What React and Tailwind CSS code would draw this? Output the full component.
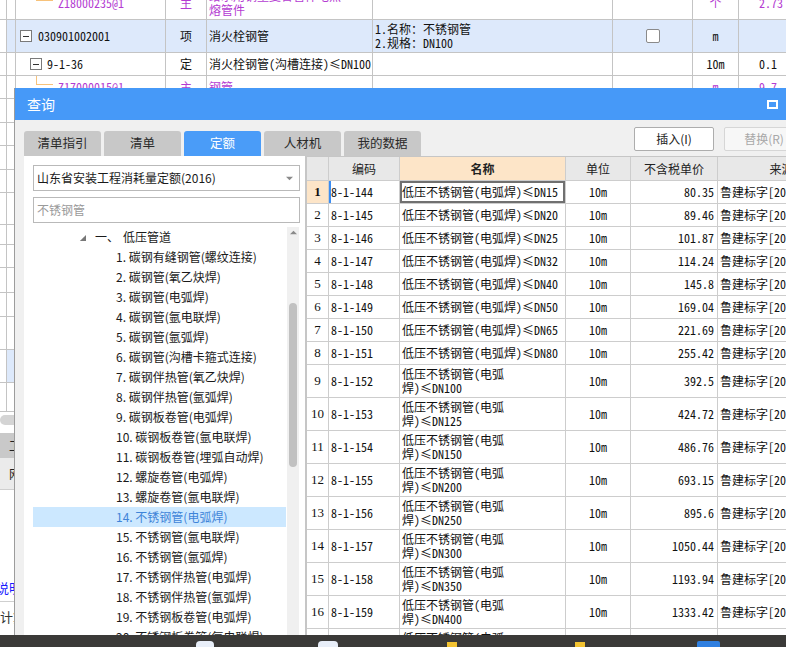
const sim = "font-['Noto_Sans_Mono_CJK_SC','Noto_Sans_CJK_SC',monospace]"
const ui = "font-['Noto_Sans_CJK_SC','Noto_Sans',sans-serif]"

const bgCols = 'grid grid-cols-[7px_9px_150px_41px_166px_240px_80px_46px_120px]'
const bgCell = 'border-r border-b border-[#c4c4c4] flex items-center'

const treeItems = [
  '碳钢有缝钢管(螺纹连接)',
  '碳钢管(氧乙炔焊)',
  '碳钢管(电弧焊)',
  '碳钢管(氩电联焊)',
  '碳钢管(氩弧焊)',
  '碳钢管(沟槽卡箍式连接)',
  '碳钢伴热管(氧乙炔焊)',
  '碳钢伴热管(氩弧焊)',
  '碳钢板卷管(电弧焊)',
  '碳钢板卷管(氩电联焊)',
  '碳钢板卷管(埋弧自动焊)',
  '螺旋卷管(电弧焊)',
  '螺旋卷管(氩电联焊)',
  '不锈钢管(电弧焊)',
  '不锈钢管(氩电联焊)',
  '不锈钢管(氩弧焊)',
  '不锈钢伴热管(电弧焊)',
  '不锈钢伴热管(氩弧焊)',
  '不锈钢板卷管(电弧焊)',
  '不锈钢板卷管(氩电联焊)',
]

const rows = [
  ['8-1-144', 'DN15', '80.35'],
  ['8-1-145', 'DN20', '89.46'],
  ['8-1-146', 'DN25', '101.87'],
  ['8-1-147', 'DN32', '114.24'],
  ['8-1-148', 'DN40', '145.8'],
  ['8-1-149', 'DN50', '169.04'],
  ['8-1-150', 'DN65', '221.69'],
  ['8-1-151', 'DN80', '255.42'],
  ['8-1-152', 'DN100', '392.5'],
  ['8-1-153', 'DN125', '424.72'],
  ['8-1-154', 'DN150', '486.76'],
  ['8-1-155', 'DN200', '693.15'],
  ['8-1-156', 'DN250', '895.6'],
  ['8-1-157', 'DN300', '1050.44'],
  ['8-1-158', 'DN350', '1193.94'],
  ['8-1-159', 'DN400', '1333.42'],
  ['8-1-160', 'DN450', '1471.08'],
]

const gridCell = 'border-r border-b border-[#cdcdcd] flex items-center shrink-0'

function MinusBox() {
  return (
    <span className="w-[12px] h-[12px] border border-[#7a7a7a] bg-white flex items-center justify-center shrink-0">
      <span className="w-[6px] h-px bg-[#333]" />
    </span>
  )
}

function Corner() {
  return (
    <>
      <span className="absolute left-[20px] top-0 w-px h-[calc(50%-3px)] bg-[#f7c27a]" />
      <span className="absolute left-[20px] top-[calc(50%-3px)] w-[17px] h-px bg-[#f7c27a]" />
    </>
  )
}

function Background() {
  const filler = [24, 23, 24, 23, 32, 20, 23, 25, 24, 33, 33, 29]
  return (
    <div className={`${sim} text-[12px] text-[#111]`}>
      <div className="-mt-[14px]">
        {/* row A */}
        <div className={`${bgCols} h-[34px] text-[#b43cd2]`}>
          <div className={bgCell} />
          <div className={bgCell} />
          <div className={`${bgCell} relative`}>
            <Corner />
            <span className="ml-[42px]">Z18000235@1</span>
          </div>
          <div className={`${bgCell} justify-center`}>主</div>
          <div className={`${bgCell} pl-[2px] leading-[14px]`}>
            给水用钢塑复合管件电热
            <br />
            熔管件
          </div>
          <div className={bgCell} />
          <div className={bgCell} />
          <div className={`${bgCell} justify-center`}>个</div>
          <div className={`${bgCell} pl-[20px]`}>2.73</div>
        </div>
        {/* row B */}
        <div className={`${bgCols} h-[33px]`}>
          <div className={bgCell} />
          <div className={`${bgCell} bg-[#dde9fb]`} />
          <div className={`${bgCell} bg-[#dde9fb]`}>
            <span className="ml-[4px]">
              <MinusBox />
            </span>
            <span className="ml-[6px]">030901002001</span>
          </div>
          <div className={`${bgCell} bg-[#dde9fb] justify-center`}>项</div>
          <div className={`${bgCell} bg-[#dde9fb] pl-[2px]`}>消火栓钢管</div>
          <div className={`${bgCell} bg-[#dde9fb] pl-[2px] leading-[14px]`}>
            1.名称：不锈钢管
            <br />
            2.规格：DN100
          </div>
          <div className={`${bgCell} bg-[#dde9fb] justify-center`}>
            <span className="w-[14px] h-[14px] rounded-[2px] border border-[#8a8a8a] bg-white" />
          </div>
          <div className={`${bgCell} bg-[#dde9fb] justify-center`}>m</div>
          <div className={`${bgCell} bg-[#dde9fb]`} />
        </div>
        {/* row C */}
        <div className={`${bgCols} h-[23px]`}>
          <div className={bgCell} />
          <div className={bgCell} />
          <div className={bgCell}>
            <span className="ml-[14px]">
              <MinusBox />
            </span>
            <span className="ml-[5px]">9-1-36</span>
          </div>
          <div className={`${bgCell} justify-center`}>定</div>
          <div className={`${bgCell} pl-[2px] whitespace-nowrap`}>消火栓钢管(沟槽连接)≤DN100</div>
          <div className={bgCell} />
          <div className={bgCell} />
          <div className={`${bgCell} justify-center`}>10m</div>
          <div className={`${bgCell} pl-[20px]`}>0.1</div>
        </div>
        {/* row D */}
        <div className={`${bgCols} h-[23px] text-[#b43cd2]`}>
          <div className={bgCell} />
          <div className={bgCell} />
          <div className={`${bgCell} relative`}>
            <Corner />
            <span className="ml-[42px]">Z17000015@1</span>
          </div>
          <div className={`${bgCell} justify-center`}>主</div>
          <div className={`${bgCell} pl-[2px]`}>钢管</div>
          <div className={bgCell} />
          <div className={bgCell} />
          <div className={`${bgCell} justify-center`}>m</div>
          <div className={`${bgCell} pl-[20px]`}>9.7</div>
        </div>
        {filler.map((h, i) => (
          <div key={i} className={bgCols} style={{ height: h }}>
            <div className={bgCell} />
            <div className={`${bgCell} ${i === 10 ? 'bg-[#dde9fb]' : ''}`} />
            <div className={`${bgCell} ${i === 10 ? 'bg-[#dde9fb]' : ''}`} />
            <div className={bgCell} />
            <div className={bgCell} />
            <div className={bgCell} />
            <div className={bgCell} />
            <div className={bgCell} />
            <div className={bgCell} />
          </div>
        ))}
      </div>
      <div className="h-[21px] pt-[3px] bg-white">
        <div className="h-[10px] w-[200px] rounded-full bg-[#d4d4d4]" />
      </div>
      <div className={`${ui} h-[25px] bg-[#c9c9c9] flex items-center pl-[9px] text-[12px] text-[#222]`}>工料机显示</div>
      <div className={`${ui} h-[32px] bg-[#ebebeb] border-b border-[#cfcfcf] flex items-center pl-[9px] text-[12px] text-[#222]`}>
        网格
      </div>
      <div className="h-[112px] bg-white border-b border-[#cfcfcf] flex items-end pb-[4px]">
        <span className={`${ui} -ml-[4px] text-[13px] text-[#1a1aff]`}>说明</span>
      </div>
      <div className={`${ui} h-[30px] bg-white flex items-center text-[13px] text-[#333]`}>计算</div>
    </div>
  )
}

function Tri({ className, points }) {
  return (
    <svg width="8" height="8" viewBox="0 0 8 8" className={className}>
      <polygon points={points} fill="currentColor" />
    </svg>
  )
}

function Dialog() {
  const tabs = ['清单指引', '清单', '定额', '人材机', '我的数据']
  return (
    <div className={`${ui} absolute left-[14px] top-[88px] w-[800px] h-[560px] flex flex-col border-l border-[#9c9c9c] bg-[#f0f0f0]`}>
      <div className="h-[32px] shrink-0 bg-[#4699f8] flex items-center justify-between pl-[12px] pr-[36px] text-white text-[14px]">
        <span>查询</span>
        <div className="w-[11px] h-[9px] border-2 border-white" />
      </div>

      <div className="h-[36px] shrink-0 flex pl-[9px] pt-[7px]">
        <div className="flex gap-[3px] self-end">
          {tabs.map((t) => (
            <div
              key={t}
              className={`w-[77px] h-[25px] rounded-t-[3px] flex items-center justify-center text-[12.5px] ${
                t === '定额' ? 'bg-[#4a9cf8] text-white' : 'bg-[#c8c8c8] text-[#2a2a2a]'
              }`}
            >
              {t}
            </div>
          ))}
        </div>
        <button className="ml-[213px] w-[80px] h-[24px] bg-white border border-[#adadad] rounded-[2px] text-[12px] text-[#222]">
          插入(I)
        </button>
        <button className="ml-[10px] w-[80px] h-[24px] bg-[#f7f7f7] border border-[#d6d6d6] rounded-[2px] text-[12px] text-[#a8a8a8]">
          替换(R)
        </button>
      </div>

      <div className="flex-1 flex pl-[9px] min-h-0">
        {/* left panel */}
        <div className="w-[281px] shrink-0 bg-white pt-[9px] pl-[9px] pr-[5px] flex flex-col">
          <div className="h-[26px] border border-[#b9b9b9] flex items-center justify-between pl-[3px] pr-[6px] text-[12px] text-[#1a1a1a]">
            <span>山东省安装工程消耗量定额(2016)</span>
            <Tri className="text-[#8a8a8a] w-[7px] h-[7px]" points="0,2 8,2 4,6" />
          </div>
          <div className="mt-[6px] h-[26px] border border-[#b9b9b9] flex items-center pl-[3px] text-[12px] text-[#9a9a9a]">
            不锈钢管
          </div>
          <div className="mt-[4px] flex flex-1 min-h-0">
            <div className="w-[253px] text-[12px] text-[#1a1a1a]">
              <div className="h-[20px] flex items-center">
                <Tri className="ml-[46px] text-[#777] w-[7px] h-[7px]" points="8,1 8,8 1,8" />
                <span className="ml-[9px]">一、</span>
                <span className="ml-[4px]">低压管道</span>
              </div>
              {treeItems.map((t, i) => (
                <div
                  key={t}
                  className={`h-[20px] flex items-center pl-[83px] whitespace-nowrap ${
                    i === 13 ? 'bg-[#cce8ff] text-[#3f84d8]' : ''
                  }`}
                >
                  {i + 1}. {t}
                </div>
              ))}
            </div>
            <div className="ml-[1px] w-[12px] bg-[#f0f0f0] flex flex-col items-center">
              <Tri className="mt-[2px] text-[#8a8a8a] w-[7px] h-[7px]" points="0,6 8,6 4,2" />
              <div className="mt-[67px] w-[8px] h-[164px] rounded-full bg-[#c1c1c1]" />
            </div>
          </div>
        </div>

        {/* grid */}
        <div className={`${sim} flex-1 bg-white border-l-2 border-t border-[#c6c6c6] text-[12px] text-[#111] overflow-hidden`}>
          <div className={`${ui} flex h-[24px] text-[12px] text-[#222]`}>
            <div className={`${gridCell} w-[22px] bg-[#e8e8e8]`} />
            <div className={`${gridCell} w-[71px] bg-[#e8e8e8] justify-center`}>编码</div>
            <div className={`${gridCell} w-[166px] bg-[#fde5c8] justify-center font-bold`}>名称</div>
            <div className={`${gridCell} w-[65px] bg-[#e8e8e8] justify-center`}>单位</div>
            <div className={`${gridCell} w-[87px] bg-[#e8e8e8] justify-center`}>不含税单价</div>
            <div className={`${gridCell} w-[128px] bg-[#e8e8e8] justify-center`}>来源</div>
          </div>
          {rows.map(([code, dn, price], i) => {
            const tall = i >= 8
            const first = i === 0
            return (
              <div key={code} className={`flex ${tall ? 'h-[33px]' : 'h-[23px]'}`}>
                <div
                  className={`${gridCell} w-[22px] justify-center font-['Liberation_Serif',serif] text-[13px] ${
                    first ? 'bg-[#fde5c8] font-bold' : ''
                  }`}
                >
                  {i + 1}
                </div>
                <div className={`${gridCell} w-[71px] pl-[2px] ${first ? 'shadow-[inset_2px_0_0_#3b8df2]' : ''}`}>
                  {code}
                </div>
                <div
                  className={`${gridCell} w-[166px] pl-[2px] leading-[14px] whitespace-nowrap ${
                    first ? 'shadow-[inset_0_0_0_2px_#707070]' : ''
                  }`}
                >
                  {tall ? (
                    <span>
                      低压不锈钢管(电弧
                      <br />
                      焊)≤{dn}
                    </span>
                  ) : (
                    <span>低压不锈钢管(电弧焊)≤{dn}</span>
                  )}
                </div>
                <div className={`${gridCell} w-[65px] justify-center`}>10m</div>
                <div className={`${gridCell} w-[87px] justify-end pr-[3px]`}>{price}</div>
                <div className={`${gridCell} w-[128px] pl-[2px] whitespace-nowrap overflow-hidden`}>
                  鲁建标字[2016]38号
                </div>
              </div>
            )
          })}
        </div>
      </div>
    </div>
  )
}

export default function App() {
  return (
    <div className="w-[786px] h-[647px] overflow-hidden flex flex-col bg-white">
      <div className="relative flex-1 overflow-hidden">
        <Background />
        <Dialog />
      </div>
      <div className="h-[12px] shrink-0 bg-[#3b3a38] flex items-start">
        <span className="ml-[196px] mt-[6px] w-[18px] h-[8px] rounded-t-[4px] bg-[#e8eef8]" />
        <span className="ml-[104px] mt-[6px] w-[20px] h-[8px] rounded-t-[4px] bg-[#e8eef8]" />
        <span className="ml-[109px] mt-[7px] w-[10px] h-[8px] bg-[#f2c230]" />
        <span className="ml-[118px] mt-[7px] w-[10px] h-[8px] bg-[#f2c230]" />
        <span className="ml-[112px] mt-[6px] w-[23px] h-[8px] rounded-t-[2px] bg-[#2f7fe0]" />
      </div>
    </div>
  )
}
